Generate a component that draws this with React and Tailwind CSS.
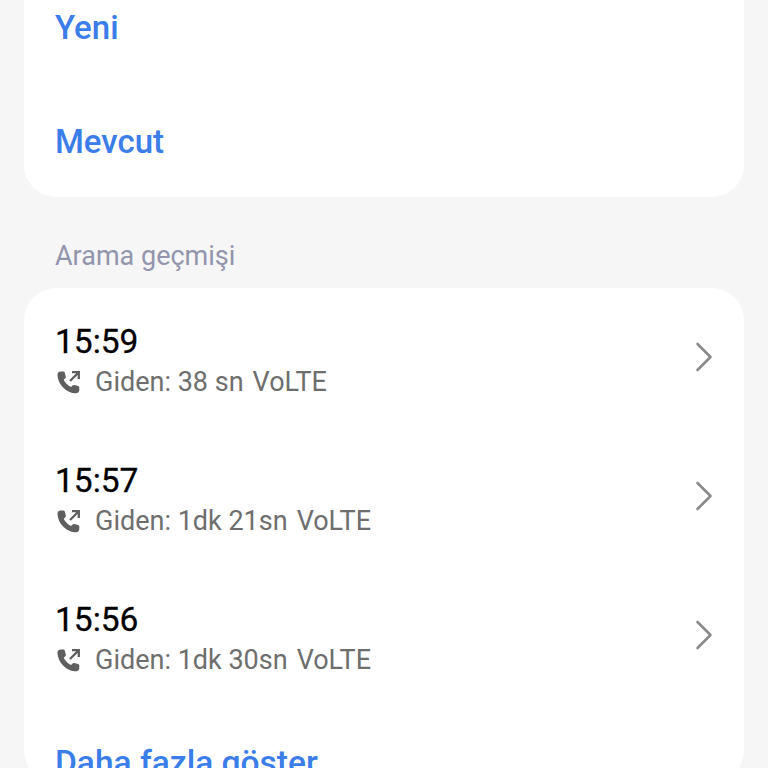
import React from "react";

const calls = [
  { time: "15:59", detail: "Giden: 38 sn", },
  { time: "15:57", detail: "Giden: 1dk 21sn" },
  { time: "15:56", detail: "Giden: 1dk 30sn" },
];

function OutgoingCall() {
  return (
    <svg width="26" height="26" viewBox="0 0 26 26" className="ml-[1px] shrink-0" fill="none">
      <path
        d="M1.500 5.500C1.500 3.800 3 2.500 4.700 2.500h2.500c.8 0 1.400.5 1.600 1.200l1 3.700c.2.700 0 1.300-.5 1.800L7.700 10.800c1.500 3 4.300 5.800 7.300 7.300l1.600-1.600c.5-.5 1.100-.7 1.800-.5l3.700 1c.7.200 1.200.8 1.200 1.600v2.500c0 1.700-1.300 3.200-3 3.200C10.500 24.300 1.500 15.300 1.500 5.500z"
        fill="#5f5f5f"
      />
      <path d="M14 12 22 4M16 3.200h6.800V10" stroke="#5f5f5f" strokeWidth="2.300" />
    </svg>
  );
}

function Chevron() {
  return (
    <svg width="20" height="30" viewBox="0 0 20 30" fill="none" className="shrink-0">
      <path d="M3.500 2 16.500 15 3.500 28" stroke="#8a8a8a" strokeWidth="2.600" strokeLinecap="round" strokeLinejoin="round" />
    </svg>
  );
}

export default function App() {
  return (
    <div className="h-[768px] w-[768px] overflow-hidden bg-[#f6f6f7] px-6 font-['Roboto',sans-serif]">
      <div className="-mt-[30px] flex h-[227px] flex-col rounded-b-[32px] bg-white pl-[31px] pr-8 pt-[39px]">
        <div className="flex h-[38px] items-center text-[33px] font-medium text-[#3b7de9]">Yeni</div>
        <div className="mt-[76px] flex h-[38px] items-center text-[33px] font-medium text-[#3b7de9]">Mevcut</div>
      </div>
      <div className="flex h-[91px] items-start pl-[31px] pr-8 pt-[41px] text-[27px] leading-[36px] text-[#9295ad]">Arama geçmişi</div>
      <div className="rounded-[32px] bg-white pt-[30px]">
        {calls.map((c) => (
          <div key={c.time} className="flex h-[139px] items-start justify-between pl-[31px] pr-[30px]">
            <div className="flex flex-col">
              <div className="h-[44px] text-[33.500px] leading-[47px] text-black [-webkit-text-stroke:0.300px_black]">{c.time}</div>
              <div className="flex h-[40px] items-center gap-[13px] text-[27px] text-[#6e6e6e]">
                <OutgoingCall />
                <span>{c.detail}<span className="ml-[9px]">VoLTE</span></span>
              </div>
            </div>
            <div className="mt-[24px]"><Chevron /></div>
          </div>
        ))}
        <div className="pl-[31px] pt-[9px] text-[33.500px] font-medium leading-[38px] text-[#3b7de9]">Daha fazla göster</div>
      </div>
    </div>
  );
}
